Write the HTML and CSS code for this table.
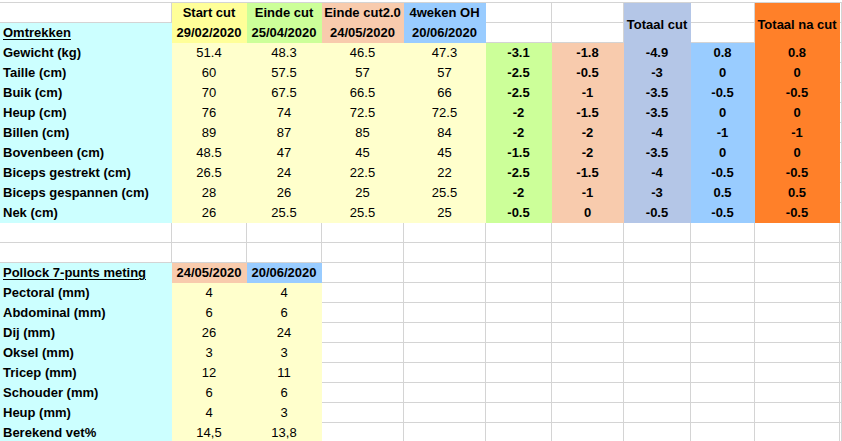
FILE: index.html
```html
<!DOCTYPE html>
<html lang="nl">
<head>
<meta charset="utf-8">
<title>Omtrekken</title>
<link rel="stylesheet" href="styles.css">
</head>
<body>
<div class="sheet">
  <!-- row 1 -->
  <div class="c"></div>
  <div class="c hy b">Start cut</div>
  <div class="c gr b">Einde cut</div>
  <div class="c sa b">Einde cut2.0</div>
  <div class="c bl b">4weken OH</div>
  <div class="c"></div>
  <div class="c"></div>
  <div class="c lv b span2">Totaal cut</div>
  <div class="c"></div>
  <div class="c or b span2">Totaal na cut</div>
  <div class="c"></div>
  <!-- row 2 -->
  <div class="c lab"><span class="u">Omtrekken</span></div>
  <div class="c hy b">29/02/2020</div>
  <div class="c gr b">25/04/2020</div>
  <div class="c sa b">24/05/2020</div>
  <div class="c bl b">20/06/2020</div>
  <div class="c"></div>
  <div class="c"></div>
  <div class="c"></div>
  <div class="c"></div>
  <!-- data rows -->
  <div class="c lab">Gewicht (kg)</div><div class="c ly">51.4</div><div class="c ly">48.3</div><div class="c ly">46.5</div><div class="c ly">47.3</div><div class="c gr b">-3.1</div><div class="c sa b">-1.8</div><div class="c lv b">-4.9</div><div class="c bl b">0.8</div><div class="c or b">0.8</div><div class="c"></div>
  <div class="c lab">Taille (cm)</div><div class="c ly">60</div><div class="c ly">57.5</div><div class="c ly">57</div><div class="c ly">57</div><div class="c gr b">-2.5</div><div class="c sa b">-0.5</div><div class="c lv b">-3</div><div class="c bl b">0</div><div class="c or b">0</div><div class="c"></div>
  <div class="c lab">Buik (cm)</div><div class="c ly">70</div><div class="c ly">67.5</div><div class="c ly">66.5</div><div class="c ly">66</div><div class="c gr b">-2.5</div><div class="c sa b">-1</div><div class="c lv b">-3.5</div><div class="c bl b">-0.5</div><div class="c or b">-0.5</div><div class="c"></div>
  <div class="c lab">Heup (cm)</div><div class="c ly">76</div><div class="c ly">74</div><div class="c ly">72.5</div><div class="c ly">72.5</div><div class="c gr b">-2</div><div class="c sa b">-1.5</div><div class="c lv b">-3.5</div><div class="c bl b">0</div><div class="c or b">0</div><div class="c"></div>
  <div class="c lab">Billen (cm)</div><div class="c ly">89</div><div class="c ly">87</div><div class="c ly">85</div><div class="c ly">84</div><div class="c gr b">-2</div><div class="c sa b">-2</div><div class="c lv b">-4</div><div class="c bl b">-1</div><div class="c or b">-1</div><div class="c"></div>
  <div class="c lab">Bovenbeen (cm)</div><div class="c ly">48.5</div><div class="c ly">47</div><div class="c ly">45</div><div class="c ly">45</div><div class="c gr b">-1.5</div><div class="c sa b">-2</div><div class="c lv b">-3.5</div><div class="c bl b">0</div><div class="c or b">0</div><div class="c"></div>
  <div class="c lab">Biceps gestrekt (cm)</div><div class="c ly">26.5</div><div class="c ly">24</div><div class="c ly">22.5</div><div class="c ly">22</div><div class="c gr b">-2.5</div><div class="c sa b">-1.5</div><div class="c lv b">-4</div><div class="c bl b">-0.5</div><div class="c or b">-0.5</div><div class="c"></div>
  <div class="c lab">Biceps gespannen (cm)</div><div class="c ly">28</div><div class="c ly">26</div><div class="c ly">25</div><div class="c ly">25.5</div><div class="c gr b">-2</div><div class="c sa b">-1</div><div class="c lv b">-3</div><div class="c bl b">0.5</div><div class="c or b">0.5</div><div class="c"></div>
  <div class="c lab">Nek (cm)</div><div class="c ly">26</div><div class="c ly">25.5</div><div class="c ly">25.5</div><div class="c ly">25</div><div class="c gr b">-0.5</div><div class="c sa b">0</div><div class="c lv b">-0.5</div><div class="c bl b">-0.5</div><div class="c or b">-0.5</div><div class="c"></div>
  <!-- blank rows -->
  <div class="c"></div><div class="c"></div><div class="c"></div><div class="c"></div><div class="c"></div><div class="c"></div><div class="c"></div><div class="c"></div><div class="c"></div><div class="c"></div><div class="c"></div>
  <div class="c"></div><div class="c"></div><div class="c"></div><div class="c"></div><div class="c"></div><div class="c"></div><div class="c"></div><div class="c"></div><div class="c"></div><div class="c"></div><div class="c"></div>
  <!-- Pollock -->
  <div class="c lab"><span class="u">Pollock 7-punts meting</span></div><div class="c sa b">24/05/2020</div><div class="c bl b">20/06/2020</div><div class="c"></div><div class="c"></div><div class="c"></div><div class="c"></div><div class="c"></div><div class="c"></div><div class="c"></div><div class="c"></div>
  <div class="c lab">Pectoral (mm)</div><div class="c ly">4</div><div class="c ly">4</div><div class="c"></div><div class="c"></div><div class="c"></div><div class="c"></div><div class="c"></div><div class="c"></div><div class="c"></div><div class="c"></div>
  <div class="c lab">Abdominal (mm)</div><div class="c ly">6</div><div class="c ly">6</div><div class="c"></div><div class="c"></div><div class="c"></div><div class="c"></div><div class="c"></div><div class="c"></div><div class="c"></div><div class="c"></div>
  <div class="c lab">Dij (mm)</div><div class="c ly">26</div><div class="c ly">24</div><div class="c"></div><div class="c"></div><div class="c"></div><div class="c"></div><div class="c"></div><div class="c"></div><div class="c"></div><div class="c"></div>
  <div class="c lab">Oksel (mm)</div><div class="c ly">3</div><div class="c ly">3</div><div class="c"></div><div class="c"></div><div class="c"></div><div class="c"></div><div class="c"></div><div class="c"></div><div class="c"></div><div class="c"></div>
  <div class="c lab">Tricep (mm)</div><div class="c ly">12</div><div class="c ly">11</div><div class="c"></div><div class="c"></div><div class="c"></div><div class="c"></div><div class="c"></div><div class="c"></div><div class="c"></div><div class="c"></div>
  <div class="c lab">Schouder (mm)</div><div class="c ly">6</div><div class="c ly">6</div><div class="c"></div><div class="c"></div><div class="c"></div><div class="c"></div><div class="c"></div><div class="c"></div><div class="c"></div><div class="c"></div>
  <div class="c lab">Heup (mm)</div><div class="c ly">4</div><div class="c ly">3</div><div class="c"></div><div class="c"></div><div class="c"></div><div class="c"></div><div class="c"></div><div class="c"></div><div class="c"></div><div class="c"></div>
  <div class="c lab">Berekend vet%</div><div class="c ly">14,5</div><div class="c ly">13,8</div><div class="c"></div><div class="c"></div><div class="c"></div><div class="c"></div><div class="c"></div><div class="c"></div><div class="c"></div><div class="c"></div>
</div>
</body>
</html>
```
FILE: styles.css
```css
html, body {
  margin: 0;
  padding: 0;
  background: #fff;
  overflow: hidden;
}
body {
  width: 842px;
  height: 441px;
}
.sheet {
  margin-top: 2px;
  border-top: 1px solid #d4d4d4;
  display: grid;
  grid-template-columns: 172px 75px 75px 82px 82px 66px 72px 67px 64px 85px 1fr;
  grid-auto-rows: 20px;
  font-family: "Liberation Sans", Arial, sans-serif;
  font-size: 13px;
  color: #000;
}
.c {
  box-sizing: border-box;
  background: #fff;
  border-right: 1px solid #d4d4d4;
  border-bottom: 1px solid #d4d4d4;
  line-height: 19px;
  text-align: center;
  white-space: nowrap;
  overflow: hidden;
}
.span2 {
  grid-row: span 2;
  display: flex;
  align-items: center;
  justify-content: center;
  padding-top: 4px;
}
.b { font-weight: bold; }
.u { text-decoration: underline; text-underline-offset: 2px; }
.lab {
  text-align: left;
  padding-left: 3px;
  font-weight: bold;
  background: #ccffff;
  border-color: #ccffff;
}
.hy { background: #ffff99; border-color: #ffff99; }
.ly { background: #ffffcc; border-color: #ffffcc; }
.gr { background: #ccff99; border-color: #ccff99; }
.sa { background: #f8cbad; border-color: #f8cbad; }
.bl { background: #99ccff; border-color: #99ccff; }
.lv { background: #b4c6e7; border-color: #b4c6e7; }
.or { background: #ff8029; border-color: #ff8029; }
```
